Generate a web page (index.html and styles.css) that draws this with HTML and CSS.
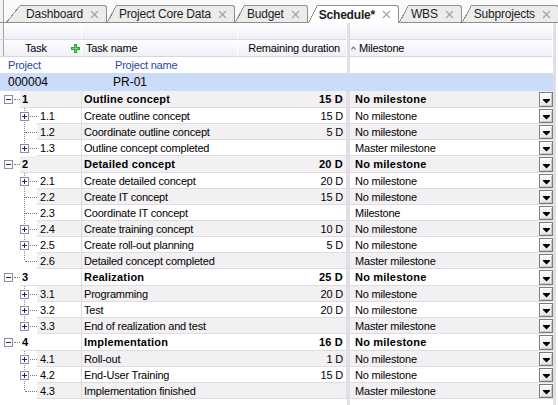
FILE: index.html
```html
<!DOCTYPE html>
<html lang="en">
<head>
  <meta charset="UTF-8" />
  <title>Schedule</title>
  <link rel="stylesheet" href="styles.css">
</head>
<body>

  <div class="screen">
    <div class="tabs">
      <div class="tab"><span class="slant"></span><span class="tab-body">Dashboard<svg class="x" width="9" height="9"><path d="M1 1l7 7M8 1l-7 7"/></svg></span></div>
      <div class="tab"><span class="slant"></span><span class="tab-body">Project Core Data<svg class="x" width="9" height="9"><path d="M1 1l7 7M8 1l-7 7"/></svg></span></div>
      <div class="tab"><span class="slant"></span><span class="tab-body">Budget<svg class="x" width="9" height="9"><path d="M1 1l7 7M8 1l-7 7"/></svg></span></div>
      <div class="tab active"><span class="slant"></span><span class="tab-body">Schedule*<svg class="x" width="9" height="9"><path d="M1 1l7 7M8 1l-7 7"/></svg></span></div>
      <div class="tab"><span class="slant"></span><span class="tab-body">WBS<svg class="x" width="9" height="9"><path d="M1 1l7 7M8 1l-7 7"/></svg></span></div>
      <div class="tab"><span class="slant"></span><span class="tab-body">Subprojects<svg class="x" width="9" height="9"><path d="M1 1l7 7M8 1l-7 7"/></svg></span></div>
    </div>

    <div class="row head-blank">
      <div class="hc c1"></div><div class="hc c2"></div><div class="hc c3"></div>
      <div></div><div class="hc c5"></div><div></div><div class="gap"></div>
    </div>

    <div class="row head">
      <div class="hc c1">Task
        <svg class="plus" width="9" height="9" viewBox="0 0 9 9"><path d="M3 0h3v3h3v3h-3v3h-3v-3h-3v-3h3z" fill="#2fa52f"/><path d="M4 1h1v3h3v1h-3v3h-1v-3h-3v-1h3z" fill="#6fd86f"/></svg>
      </div>
      <div class="hc c2">Task name</div>
      <div class="hc c3">Remaining duration</div>
      <div></div>
      <div class="hc c5"><svg class="caret" width="5" height="4"><path d="M0.5 3.5L2.5 0.8L4.5 3.5"/></svg>Milestone</div>
      <div></div><div class="gap"></div>
    </div>

    <div class="row proj-head">
      <div class="c1">Project</div>
      <div class="c2">Project name</div>
    </div>

    <div class="row proj">
      <div class="c1">000004</div>
      <div class="c2">PR-01</div>
      <div class="fill"></div><div class="fill"></div><div class="fill"></div><div class="fill"></div>
    </div>

    <div id="tasks"></div>
  </div>

  <script>
    const tasks = [
      ['1', 'Outline concept', '15 D', 'No milestone', 'group'],
      ['1.1', 'Create outline concept', '15 D', 'No milestone', 'plus'],
      ['1.2', 'Coordinate outline concept', '5 D', 'No milestone', 'leaf'],
      ['1.3', 'Outline concept completed', '', 'Master milestone', 'plus'],
      ['2', 'Detailed concept', '20 D', 'No milestone', 'group'],
      ['2.1', 'Create detailed concept', '20 D', 'No milestone', 'plus'],
      ['2.2', 'Create IT concept', '15 D', 'No milestone', 'leaf'],
      ['2.3', 'Coordinate IT concept', '', 'Milestone', 'leaf'],
      ['2.4', 'Create training concept', '10 D', 'No milestone', 'plus'],
      ['2.5', 'Create roll-out planning', '5 D', 'No milestone', 'plus'],
      ['2.6', 'Detailed concept completed', '', 'Master milestone', 'leaf'],
      ['3', 'Realization', '25 D', 'No milestone', 'group'],
      ['3.1', 'Programming', '20 D', 'No milestone', 'plus'],
      ['3.2', 'Test', '20 D', 'No milestone', 'plus'],
      ['3.3', 'End of realization and test', '', 'Master milestone', 'plus'],
      ['4', 'Implementation', '16 D', 'No milestone', 'group'],
      ['4.1', 'Roll-out', '1 D', 'No milestone', 'plus'],
      ['4.2', 'End-User Training', '15 D', 'No milestone', 'plus'],
      ['4.3', 'Implementation finished', '', 'Master milestone', 'leaf']
    ];

    function box(open) {
      const sign = open ? 'M2 4.5h5' : 'M2 4.5h5M4.5 2v5';
      return '<svg class="box" width="9" height="9"><rect x=".5" y=".5" width="8" height="8" fill="#fff" stroke="#8e8e9c"/>' +
        '<path d="' + sign + '" stroke="#20245e"/></svg>';
    }

    const arrow = '<svg width="7" height="5"><path d="M0 0h7v1L3.5 4.5 0 1z" fill="#000"/></svg>';

    let html = '';
    tasks.forEach((t, i) => {
      const [num, name, dur, ms, kind] = t;
      const isGroup = kind === 'group';
      const next = tasks[i + 1];
      const last = !isGroup && (!next || next[4] === 'group');
      let cls = 'row task ' + (isGroup ? 'group' : 'child');
      if (i % 2 === 0) cls += ' even';
      if (last) cls += ' last';

      let tree = '';
      if (isGroup) tree = box(true) + '<span class="dots"></span>';
      else if (kind === 'plus') tree = box(false) + '<span class="dots"></span>';
      else tree = '<span class="dots long"></span>';

      html += '<div class="' + cls + '">' +
        '<div class="cell c1"><span class="tree">' + tree + '</span><span class="num">' + num + '</span></div>' +
        '<div class="cell c2">' + name + '</div>' +
        '<div class="cell c3">' + dur + '</div>' +
        '<div></div>' +
        '<div class="cell c5">' + ms + '</div>' +
        '<div class="cell c6"><span class="drop">' + arrow + '</span></div>' +
        '</div>';
    });
    document.getElementById('tasks').innerHTML = html;
  </script>
</body>
</html>
```

FILE: styles.css
```css
* {
  box-sizing: border-box;
}

body {
  margin: 0;
  font-family: "Liberation Sans", Arial, sans-serif;
  font-size: 11px;
  color: #000;
  background: #fff;
}

.screen {
  width: 558px;
  height: 405px;
  overflow: hidden;
  background: linear-gradient(to right, #fff 347px, #e2dee7 347px 350px, #fff 350px 553px, #e2dee7 553px 556px, #fff 556px);
}

/* tab strip */

.tabs {
  display: flex;
  align-items: flex-end;
  height: 23px;
  padding-left: 6px;
  border-bottom: 1px solid #8e8e8e;
  background: linear-gradient(to right, #f3f3f3 0 3px, #a3a3a3 3px 4px, #fafafa 4px);
  white-space: nowrap;
}

.tab {
  display: flex;
  flex-shrink: 0;
  height: 17px;
}

.slant {
  width: 9px;
  background: linear-gradient(to top left, #ececec calc(50% - 1px), #8f8f8f calc(50% - 1px), #8f8f8f 50%, transparent 50%);
}

.tab-body {
  display: flex;
  align-items: center;
  padding: 0 7px 0 3px;
  border-top: 1px solid #8f8f8f;
  border-right: 1px solid #8f8f8f;
  border-top-right-radius: 3px;
  background: #ececec;
  font-size: 12px;
  letter-spacing: -0.2px;
  color: #1c1c1c;
}

.tab:first-child .slant {
  width: 14px;
}

.tab:first-child .tab-body {
  padding-left: 6px;
}

.tab .x {
  margin-left: 7px;
  stroke: #a2a2a2;
  stroke-width: 1.1;
}

.tab.active {
  height: 18px;
  margin-bottom: -1px;
}

.tab.active .slant {
  background: linear-gradient(to top left, #fff calc(50% - 1px), #8f8f8f calc(50% - 1px), #8f8f8f 50%, transparent 50%);
}

.tab.active .tab-body {
  background: #fff;
  font-weight: bold;
  padding-left: 2px;
}

/* grid rows */

.row {
  display: grid;
  grid-template-columns: 82px 156px 109px 3px 189px 14px 3px 2px;
}

.gap {
  background: #fff;
}

.hc {
  background: linear-gradient(#fefeff, #efeff7);
  border-bottom: 1px solid #d8d5dc;
  border-right: 1px solid #fff;
}

.head-blank {
  height: 17px;
}

.head-blank .c1,
.head .c1 {
  background: linear-gradient(to right, #f3f3f3 0 3px, #a3a3a3 3px 4px, transparent 4px), linear-gradient(#fefeff, #efeff7);
}

.head-blank .c5,
.head .c5 {
  grid-column: span 2;
}

.head {
  height: 17px;
}

.head .hc {
  display: flex;
  align-items: center;
  letter-spacing: -0.2px;
}

.head .c1 {
  padding-left: 25px;
}

.head .plus {
  margin-left: auto;
  margin-right: 1px;
}

.head .c2 {
  padding-left: 4px;
}

.head .c3 {
  justify-content: flex-end;
  padding-right: 6px;
}

.head .c5 {
  padding-left: 1px;
}

.caret {
  margin-right: 3px;
  fill: none;
  stroke: #4a4a4a;
}

.proj-head {
  height: 16px;
  color: #1f45a8;
  align-items: center;
  letter-spacing: -0.2px;
}

.proj-head .c1 {
  padding-left: 8px;
  background: #fff;
}

.proj-head .c2 {
  padding-left: 33px;
  background: #fff;
}

.proj {
  height: 18px;
  font-size: 12px;
  align-items: stretch;
}

.proj > div {
  background: #cadcf8;
  display: flex;
  align-items: center;
}

.proj .c1 {
  padding-left: 8px;
}

.proj .c2 {
  padding-left: 31px;
}

/* task rows */

.task {
  height: 16px;
  letter-spacing: -0.2px;
}

.task.group {
  height: 17px;
  font-weight: bold;
  letter-spacing: 0.2px;
}

.cell {
  display: flex;
  align-items: center;
  border-bottom: 1px solid #dfdcdf;
  background: #fff;
  white-space: nowrap;
  overflow: hidden;
}

.task .c1 {
  align-items: stretch;
  padding: 0;
  border-bottom: 0;
  border-right: 1px solid #dfdcdf;
}

.tree {
  display: flex;
  align-items: center;
  width: 37px;
  background: #fff;
}

.child .tree {
  background: repeating-linear-gradient(#8a8a8a 0 1px, transparent 1px 2px) 24px 0 / 1px 100% no-repeat #fff;
}

.child.last .tree {
  background-size: 1px 8px;
}

.group .tree {
  width: 20px;
  padding-left: 4px;
}

.child .box {
  margin-left: 20px;
}

.dots {
  height: 0;
  width: 7px;
  margin-left: 1px;
  border-top: 1px dotted #7c7c7c;
}

.group .dots {
  width: 6px;
}

.dots.long {
  width: 12px;
  margin-left: 25px;
}

.num {
  flex: 1;
  display: flex;
  align-items: center;
  padding-left: 3px;
  border-bottom: 1px solid #dfdcdf;
  background: #fff;
}

.group .num {
  padding-left: 2px;
}

.c2 {
  padding-left: 2px;
}

.task .c3 {
  justify-content: flex-end;
  padding-right: 3px;
  border-right: 1px solid #dfdcdf;
}

.c5 {
  padding-left: 5px;
}

.task .c6 {
  align-items: stretch;
  padding-top: 1px;
}

.even .num,
.even .c2,
.even .c3,
.even .c5,
.even .c6 {
  background: #f2f0f2;
}

.drop {
  flex: 1;
  display: flex;
  align-items: flex-end;
  justify-content: center;
  padding-bottom: 2px;
  border: 1px solid #7b7b7b;
  background: linear-gradient(#fbfbfb, #e6e6e6);
  box-shadow: inset 1px 1px 0 #fff, inset -1px -1px 0 #c8c8c8;
}
```
